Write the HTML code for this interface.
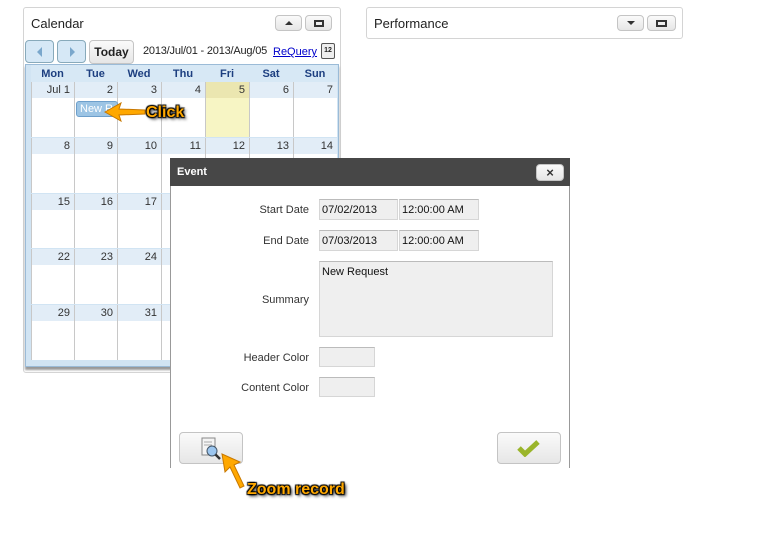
<!DOCTYPE html>
<html><head><style>
*{box-sizing:border-box;margin:0;padding:0}
body{width:780px;height:547px;background:#fff;position:relative;overflow:hidden;font-family:"Liberation Sans",Arial,sans-serif;font-size:12px;color:#222}
.a{position:absolute}
.panel{border:1px solid #d4d4d4;border-radius:3px;background:#fff}
.btn{border:1px solid #c4c4c4;border-radius:4px;background:linear-gradient(#fafafa,#e6e6e6)}
.hd{background:#d7e8f5;color:#1d3f80;font-weight:bold;font-size:11px;text-align:center;line-height:16px}
.cell{position:absolute;border-left:1px solid #c8c8c8;background:#fff}
.bar{height:16px;background:#e2edf7;text-align:right;padding-right:4px;line-height:17px;font-size:11px;color:#333}
.lbl{position:absolute;font-size:11px;color:#333;text-align:right;width:120px}
.inp{position:absolute;background:#efefef;border:1px solid #d6d6d6;border-top-color:#bbb;font-size:11px;padding:4px 2px 2px;line-height:13px;color:#111}
.cl{font-weight:bold;color:#ffa800;font-size:16px;text-shadow:1px 1px 1px #000,-1px -1px 1px #000,1px -1px 1px #000,-1px 1px 1px #000,2px 2px 3px #000}
</style></head><body>

<div class="a panel" style="left:23px;top:7px;width:318px;height:366px"></div>
<div class="a" style="left:31px;top:16px;font-size:13px">Calendar</div>
<div class="a btn" style="left:275px;top:15px;width:27px;height:16px"><div class="a" style="left:9px;top:5px;border-left:4px solid transparent;border-right:4px solid transparent;border-bottom:4px solid #333"></div></div>
<div class="a btn" style="left:305px;top:15px;width:27px;height:16px"><div class="a" style="left:8px;top:4px;width:10px;height:7px;border:2px solid #333"></div></div>
<div class="a btn" style="left:25px;top:40px;width:29px;height:23px;background:#d6e8f6;border-color:#8ab"><div class="a" style="left:11px;top:6px;border-top:5px solid transparent;border-bottom:5px solid transparent;border-right:5px solid #7aa7cc"></div></div>
<div class="a btn" style="left:57px;top:40px;width:29px;height:23px;background:#d6e8f6;border-color:#8ab"><div class="a" style="left:12px;top:6px;border-top:5px solid transparent;border-bottom:5px solid transparent;border-left:5px solid #7aa7cc"></div></div>
<div class="a btn" style="left:89px;top:40px;width:45px;height:24px;font-size:12px;font-weight:bold;text-align:center;line-height:23px">Today</div>
<div class="a" style="left:143px;top:45px;font-size:11px;letter-spacing:-0.2px">2013/Jul/01 - 2013/Aug/05</div>
<div class="a" style="left:273px;top:46px;font-size:11px;color:#00c;text-decoration:underline">ReQuery</div>
<div class="a" style="left:321px;top:43px;width:14px;height:16px;border:1px solid #555;border-radius:2px;background:#eee;font-size:7px;text-align:center;line-height:14px;font-weight:bold">12</div>

<div class="a" style="left:25px;top:64px;width:314px;height:303px;background:#d1e4f3;border:1px solid #9bbbd7;box-shadow:0 3px 2px #999"></div>
<div class="a hd" style="left:31px;top:65px;width:306px;height:17px"></div>
<div class="a" style="left:31px;top:66px;width:306px;font-size:11px;font-weight:bold;color:#1d3f80;line-height:17px">
<span class="a" style="left:0;width:43px;text-align:center">Mon</span><span class="a" style="left:43px;width:43px;text-align:center">Tue</span><span class="a" style="left:86px;width:44px;text-align:center">Wed</span><span class="a" style="left:130px;width:44px;text-align:center">Thu</span><span class="a" style="left:174px;width:44px;text-align:center">Fri</span><span class="a" style="left:218px;width:44px;text-align:center">Sat</span><span class="a" style="left:262px;width:44px;text-align:center">Sun</span>
</div>

<div id="grid"></div>
<script>
var xs=[31,74,117,161,205,249,293,337],ys=[82,138,194,249,305,361];
var d=[["Jul 1",2,3,4,5,6,7],[8,9,10,11,12,13,14],[15,16,17,18,19,20,21],[22,23,24,25,26,27,28],[29,30,31,1,2,3,4]];
var h="";
for(var r=0;r<5;r++)for(var c=0;c<7;c++){
var fri=(r==0&&c==4);
h+='<div class="cell" style="left:'+xs[c]+'px;top:'+ys[r]+'px;width:'+(xs[c+1]-xs[c])+'px;height:'+(ys[r+1]-ys[r]-1)+'px;'+(fri?'background:#f7f5c4':'')+'"><div class="bar" style="'+(fri?'background:#ebe6b0':'')+'">'+d[r][c]+'</div></div>';
}
document.getElementById("grid").innerHTML=h;
</script>
<div class="a" style="left:76px;top:101px;width:42px;height:16px;background:#9cc4e4;border:1px solid #6d9fcb;border-radius:3px;color:#fff;font-size:11px;line-height:15px;padding-left:3px;overflow:hidden">New R</div>
<svg class="a" style="left:103px;top:101px" width="44" height="22"><path d="M2 11 L18 2 L16 8 L42 9 L42 13 L16 14 L18 20 Z" fill="#ffa800" stroke="#c87800"/></svg>
<div class="a cl" style="left:146px;top:104px">Click</div>

<div class="a panel" style="left:366px;top:7px;width:317px;height:32px"></div>
<div class="a" style="left:374px;top:16px;font-size:13px">Performance</div>
<div class="a btn" style="left:617px;top:15px;width:27px;height:16px"><div class="a" style="left:9px;top:5px;border-left:4px solid transparent;border-right:4px solid transparent;border-top:4px solid #333"></div></div>
<div class="a btn" style="left:647px;top:15px;width:29px;height:16px"><div class="a" style="left:8px;top:4px;width:11px;height:7px;border:2px solid #333"></div></div>

<div class="a" style="left:170px;top:158px;width:400px;height:310px;background:#fff;border-left:1px solid #999;border-right:1px solid #999"></div>
<div class="a" style="left:170px;top:158px;width:400px;height:28px;background:#474747;color:#fff;font-weight:bold;font-size:11px;line-height:28px;padding-left:7px">Event</div>
<div class="a btn" style="left:536px;top:164px;width:28px;height:17px;text-align:center;font-size:13px;line-height:15px;color:#333;font-weight:bold">×</div>
<div class="lbl" style="left:189px;top:204px">Start Date</div>
<div class="inp" style="left:319px;top:199px;width:79px;height:21px">07/02/2013</div>
<div class="inp" style="left:399px;top:199px;width:80px;height:21px">12:00:00 AM</div>
<div class="lbl" style="left:189px;top:235px">End Date</div>
<div class="inp" style="left:319px;top:230px;width:79px;height:21px">07/03/2013</div>
<div class="inp" style="left:399px;top:230px;width:80px;height:21px">12:00:00 AM</div>
<div class="lbl" style="left:189px;top:294px">Summary</div>
<div class="inp" style="left:319px;top:261px;width:234px;height:76px">New Request</div>
<div class="lbl" style="left:189px;top:352px">Header Color</div>
<div class="inp" style="left:319px;top:347px;width:56px;height:20px"></div>
<div class="lbl" style="left:189px;top:382px">Content Color</div>
<div class="inp" style="left:319px;top:377px;width:56px;height:20px"></div>

<div class="a btn" style="left:179px;top:432px;width:64px;height:32px"></div>
<svg class="a" style="left:200px;top:437px" width="24" height="24"><rect x="2" y="1" width="13" height="17" fill="#f4f4f4" stroke="#888"/><path d="M4 5h8M4 8h8" stroke="#aaa"/><circle cx="12" cy="14" r="5" fill="#9cc6ef" stroke="#456"/><path d="M15.5 17.5 L20 22" stroke="#333" stroke-width="2.5"/></svg>
<div class="a btn" style="left:497px;top:432px;width:64px;height:32px"></div>
<svg class="a" style="left:517px;top:439px" width="24" height="18"><path d="M2 9 L8 15 L21 3" fill="none" stroke="#9ab52a" stroke-width="5"/></svg>
<svg class="a" style="left:218px;top:452px" width="30" height="40"><path d="M4 2 L22 10 L16 13 L26 34 L22 36 L12 15 L7 20 Z" fill="#ffa800" stroke="#c87800"/></svg>
<div class="a cl" style="left:247px;top:481px">Zoom record</div>
</body></html>
